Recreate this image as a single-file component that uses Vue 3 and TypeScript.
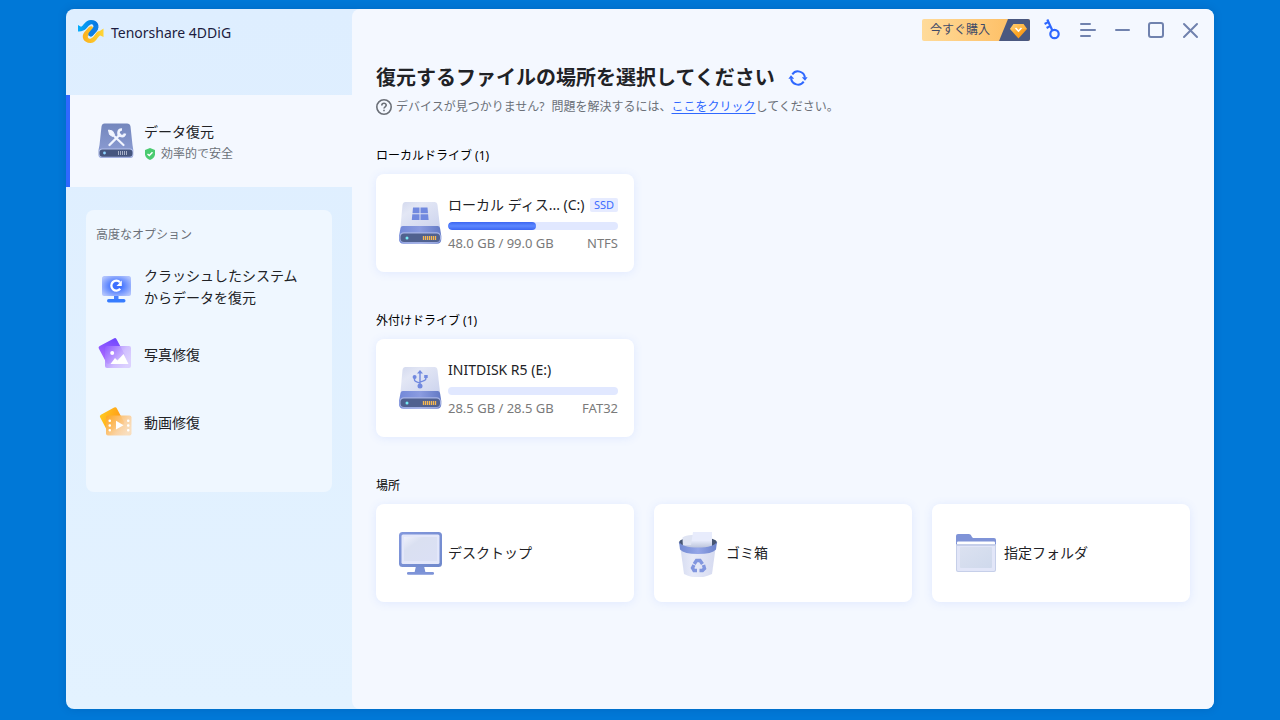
<script setup lang="ts">
interface Drive {
  id: string
  heading: string
  name: string
  used: string
  format: string
  percent: number
  badge?: string
  kind: 'windows' | 'usb'
}

interface Tool {
  id: 'crash' | 'photo' | 'video'
  lines: string[]
}

interface Place {
  id: 'desktop' | 'trash' | 'folder'
  name: string
}

const tools: Tool[] = [
  { id: 'crash', lines: ['クラッシュしたシステム', 'からデータを復元'] },
  { id: 'photo', lines: ['写真修復'] },
  { id: 'video', lines: ['動画修復'] },
]

const drives: Drive[] = [
  {
    id: 'c',
    heading: 'ローカルドライブ (1)',
    name: 'ローカル ディス... (C:)',
    used: '48.0 GB / 99.0 GB',
    format: 'NTFS',
    percent: 52,
    badge: 'SSD',
    kind: 'windows',
  },
  {
    id: 'e',
    heading: '外付けドライブ (1)',
    name: 'INITDISK R5 (E:)',
    used: '28.5 GB / 28.5 GB',
    format: 'FAT32',
    percent: 0,
    kind: 'usb',
  },
]

const places: Place[] = [
  { id: 'desktop', name: 'デスクトップ' },
  { id: 'trash', name: 'ゴミ箱' },
  { id: 'folder', name: '指定フォルダ' },
]
</script>

<template>
  <div class="desktop">
    <div class="window">
      <aside class="sidebar">
        <div class="brand">
          <svg class="logo" width="26" height="24" viewBox="0 0 26 24" aria-hidden="true">
            <defs>
              <linearGradient id="logoBlue" x1="0" y1="0" x2="1" y2="0">
                <stop offset="0" stop-color="#05adfb" />
                <stop offset="1" stop-color="#0870df" />
              </linearGradient>
              <linearGradient id="logoGold" x1="0" y1="0" x2="1" y2="0">
                <stop offset="0" stop-color="#fbb01c" />
                <stop offset="1" stop-color="#ffd535" />
              </linearGradient>
            </defs>
            <path d="M0 5 L3 6.800 C5.500 6 7 .3 13 0 C20 0 22.500 6.500 18.800 11 L14.800 15.600 C12.600 18 8.800 15.300 11 12.600 L15 7.800 C16.300 6 14.700 3.800 12.600 4.500 C9.400 5.800 8 12 0 11.500 Z" fill="url(#logoBlue)" />
            <path d="M25.500 8.500 V17 L22.300 15.500 C19.600 16 18.500 23 12.300 23 C5.500 23 2.800 16.500 6.300 12.300 L11 7 C13.300 4.700 16.800 7.400 14.800 10 L10.200 15.400 C9 17.200 10.900 19.400 12.900 18.600 C17 16.600 17.600 11 21.800 10.900 Z" fill="url(#logoGold)" />
            <path d="M18.800 11 L14.800 15.600 C12.600 18 8.800 15.300 11 12.600 L15 7.800 L19.500 4.500 Q21 8 18.800 11Z" fill="#0f7fe6" />
          </svg>
          <span>Tenorshare 4DDiG</span>
        </div>

        <button class="recovery" type="button">
          <svg width="36" height="36" viewBox="0 0 36 36" aria-hidden="true">
            <defs>
              <linearGradient id="caseTop" x1="0" y1="0" x2="0" y2="1">
                <stop offset="0" stop-color="#7487bd" />
                <stop offset="1" stop-color="#8f9fd6" />
              </linearGradient>
            </defs>
            <path d="M6.500 .5 H29 Q32 .5 32.500 3.500 L34.500 22 L35.300 27 V32 Q35.300 35 32 35 H4 Q.5 35 .5 32 V27 L1.500 22 L3.500 3.500 Q4 .5 6.500 .5Z" fill="url(#caseTop)" />
            <path d="M1 28.500 Q1 25.500 4 25.500 H32 Q35 25.500 35 28.500 V31.500 Q35 34.500 32 34.500 H4 Q1 34.500 1 31.500Z" fill="#b3c0ec" />
            <rect x="1.500" y="26.500" width="33" height="7.300" rx="3" fill="#46567f" />
            <circle cx="6.500" cy="30" r="1.400" fill="#8fd4ff" />
            <path d="M20.500 28v4m2-4v4m2-4v4m2-4v4m2-4v4" stroke="#a8b1c8" />
            <path d="M14.500 11.500 L25.500 22" stroke="#f0f4ff" stroke-width="2.200" stroke-linecap="round" />
            <path d="M10.500 7 L14.500 8 L16.500 11.500 L14.500 13.500 L11.500 11.500Z" fill="#f0f4ff" stroke="#f0f4ff" stroke-linejoin="round" />
            <path d="M22 11.500 L11.500 22" stroke="#f0f4ff" stroke-width="2.400" stroke-linecap="round" />
            <path d="M24 6.500 A3.300 3.300 0 1 0 27 10.500" fill="none" stroke="#f0f4ff" stroke-width="2.600" />
          </svg>
          <span class="recovery-text">
            <span class="recovery-name">データ復元</span>
            <span class="recovery-note">
              <svg width="12" height="12" viewBox="0 0 12 12" aria-hidden="true">
                <path d="M6 0 L11 2 V6.500 Q10.500 10 6 12 Q1.500 10 1 6.500 V2Z" fill="#4acb70" />
                <path d="M3.500 6 L5.300 7.600 L8.500 4.200" fill="none" stroke="#fff" stroke-width="1.400" />
              </svg>
              <span>効率的で安全</span>
            </span>
          </span>
        </button>

        <section class="advanced">
          <h2>高度なオプション</h2>
          <button v-for="tool in tools" :key="tool.id" class="tool" type="button">
            <svg v-if="tool.id === 'crash'" width="36" height="36" viewBox="0 0 36 36" aria-hidden="true">
              <defs>
                <radialGradient id="screenGlow" cx="50%" cy="50%" r="60%">
                  <stop offset=".25" stop-color="#3e70ff" />
                  <stop offset="1" stop-color="#afc2fd" />
                </radialGradient>
              </defs>
              <rect x="16" y="26" width="4.500" height="5" fill="#4a80ff" />
              <rect x="4" y="7" width="29" height="20" rx="2.500" fill="url(#screenGlow)" />
              <rect x="9" y="30" width="18.500" height="3.400" rx="1.700" fill="#367cff" />
              <path d="M22.200 19.800 A5 5 0 1 1 22 13.200" fill="none" stroke="#fff" stroke-width="2.300" />
              <path d="M23.800 11.500 V17 H18.500Z" fill="#fff" />
            </svg>
            <svg v-else-if="tool.id === 'photo'" width="36" height="36" viewBox="0 0 36 36" aria-hidden="true">
              <defs>
                <linearGradient id="violetBack" x1="0" y1="1" x2="1" y2="0">
                  <stop offset="0" stop-color="#b66dff" />
                  <stop offset="1" stop-color="#6d45ff" />
                </linearGradient>
                <linearGradient id="violetFront" x1="0" y1="0" x2="1" y2=".6">
                  <stop offset="0" stop-color="#9058ff" />
                  <stop offset=".65" stop-color="#cdb9ff" />
                  <stop offset="1" stop-color="#dacdff" />
                </linearGradient>
              </defs>
              <rect x="3.500" y="4" width="20" height="20" rx="2" transform="rotate(-28 13.500 14)" fill="url(#violetBack)" />
              <rect x="7" y="9" width="26" height="22" rx="2" fill="url(#violetFront)" opacity=".9" />
              <circle cx="14.200" cy="16" r="2" fill="#fff" />
              <path d="M12.500 27 L17 21 L19.500 23.500 L25.500 17 L30.500 27Z" fill="#fff" />
            </svg>
            <svg v-else width="36" height="36" viewBox="0 0 36 36" aria-hidden="true">
              <defs>
                <linearGradient id="amberBack" x1="0" y1="0" x2="1" y2="1">
                  <stop offset="0" stop-color="#ffcb20" />
                  <stop offset="1" stop-color="#ff8e16" />
                </linearGradient>
                <linearGradient id="amberFront" x1="0" y1="0" x2="1" y2=".6">
                  <stop offset="0" stop-color="#ffa51e" />
                  <stop offset=".7" stop-color="#fbd09d" />
                  <stop offset="1" stop-color="#f9dcb9" />
                </linearGradient>
              </defs>
              <rect x="4.500" y="5" width="19" height="19" rx="2" transform="rotate(-28 14 14.500)" fill="url(#amberBack)" />
              <rect x="8" y="10.500" width="25.500" height="20" rx="2" fill="url(#amberFront)" opacity=".92" />
              <path d="M18 15.800 L25.500 20.200 L18 24.600Z" fill="#fff" />
              <g fill="#fff">
                <rect x="10.500" y="14.500" width="2.500" height="2.500" rx="1" />
                <rect x="10.500" y="19.200" width="2.500" height="2.500" rx="1" />
                <rect x="10.500" y="24" width="2.500" height="2.500" rx="1" />
                <rect x="29" y="14.500" width="2.500" height="2.500" rx="1" />
                <rect x="29" y="19.200" width="2.500" height="2.500" rx="1" />
                <rect x="29" y="24" width="2.500" height="2.500" rx="1" />
              </g>
            </svg>
            <span class="tool-name">
              <span v-for="line in tool.lines" :key="line">{{ line }}</span>
            </span>
          </button>
        </section>
      </aside>

      <main class="content">
        <header class="titlebar">
          <button class="buy" type="button">
            <span>今すぐ購入</span>
            <svg width="32" height="22" viewBox="0 0 32 22" aria-hidden="true">
              <defs>
                <linearGradient id="gem" x1="0" y1="0" x2="1" y2="1">
                  <stop offset="0" stop-color="#ffd27a" />
                  <stop offset=".5" stop-color="#ffa726" />
                  <stop offset="1" stop-color="#f28a12" />
                </linearGradient>
              </defs>
              <path d="M10 0 H32 V22 H1Z" fill="#4a5880" />
              <path d="M15.500 5 H25.500 L29 10 L20.500 19.500 L12 10Z" fill="url(#gem)" />
              <path d="M15.500 5 H25.500 L29 10 H12Z" fill="#ffc766" opacity=".45" />
              <path d="M17.500 9 L20.500 12 L23.500 9" fill="none" stroke="#fff" stroke-width="1.600" />
            </svg>
          </button>
          <button class="icon-button" type="button" aria-label="登録">
            <svg width="24" height="24" viewBox="0 0 24 24" fill="none" stroke="#2f68ff" stroke-width="2.200" aria-hidden="true">
              <circle cx="12.500" cy="16" r="4.200" />
              <path d="M10.400 12.500 L5.300 1.500 M2.600 6 L7 3.600 M4.600 10 L9 7.600" />
            </svg>
          </button>
          <button class="icon-button" type="button" aria-label="メニュー">
            <svg width="24" height="24" viewBox="0 0 24 24" fill="none" stroke="#7082ae" stroke-width="2" stroke-linecap="round" aria-hidden="true">
              <path d="M5 6 H14 M5 12 H19 M5 18 H14" />
            </svg>
          </button>
          <button class="icon-button" type="button" aria-label="最小化">
            <svg width="24" height="24" viewBox="0 0 24 24" stroke="#7082ae" stroke-width="2" stroke-linecap="round" aria-hidden="true">
              <path d="M6 12 H19" />
            </svg>
          </button>
          <button class="icon-button" type="button" aria-label="最大化">
            <svg width="24" height="24" viewBox="0 0 24 24" fill="none" stroke="#7082ae" stroke-width="2" aria-hidden="true">
              <rect x="5" y="5" width="14" height="14" rx="2" />
            </svg>
          </button>
          <button class="icon-button" type="button" aria-label="閉じる">
            <svg width="24" height="24" viewBox="0 0 24 24" stroke="#7082ae" stroke-width="2" stroke-linecap="round" aria-hidden="true">
              <path d="M6 6 L19 19 M19 6 L6 19" />
            </svg>
          </button>
        </header>

        <div class="body">
          <div class="heading">
            <h1>復元するファイルの場所を選択してください</h1>
            <button class="refresh" type="button" aria-label="更新">
              <svg width="20" height="20" viewBox="0 0 20 20" aria-hidden="true">
                <path d="M4.300 6.300 A7 7 0 0 1 16.900 9.500 M15.700 13.700 A7 7 0 0 1 3.100 10.500" fill="none" stroke="#2f68ff" stroke-width="2" />
                <path d="M13.800 9.200 H19.600 L17 12.800Z M.4 10.800 H6.200 L3 7.200Z" fill="#2f68ff" />
              </svg>
            </button>
          </div>
          <p class="help">
            <svg width="16" height="16" viewBox="0 0 16 16" fill="none" stroke="#6b7078" stroke-width="1.600" aria-hidden="true">
              <circle cx="8" cy="8" r="7.200" />
              <path d="M5.800 6.500 C5.800 3.400 10.300 3.600 10.200 6.300 C10.200 7.800 8 7.800 8 9.600" />
              <path d="M8 10.800 V12.300" />
            </svg>
            <span class="question">デバイスが見つかりません?</span>
            <span>問題を解決するには、<a href="#">ここをクリック</a>してください。</span>
          </p>

          <section v-for="drive in drives" :key="drive.id" class="group">
            <h2>{{ drive.heading }}</h2>
            <div class="grid">
              <button class="card" type="button">
                <svg width="48" height="48" viewBox="0 0 48 48" aria-hidden="true">
                  <defs>
                    <linearGradient :id="'top-' + drive.id" x1="0" y1="0" x2="1" y2="1">
                      <stop offset="0" stop-color="#d3d9ee" />
                      <stop offset=".3" stop-color="#e3e7f5" />
                      <stop offset="1" stop-color="#cdd4ee" />
                    </linearGradient>
                    <linearGradient :id="'band-' + drive.id" x1="0" y1="0" x2="1" y2="0">
                      <stop offset="0" stop-color="#7288d8" />
                      <stop offset=".5" stop-color="#8b9ce0" />
                      <stop offset="1" stop-color="#6279c4" />
                    </linearGradient>
                  </defs>
                  <path d="M9.500 3 H38.500 Q41 3 41.500 6 L44 28 H4.500 L6.500 6 Q7 3 9.500 3Z" :fill="'url(#top-' + drive.id + ')'" />
                  <path d="M7 27 H41.500 Q44 27 44.200 30 L45.300 37 V40 Q45.300 44.800 41 44.800 H7.500 Q3 44.800 3 40 V37 L4.300 30 Q4.500 27 7 27Z" :fill="'url(#band-' + drive.id + ')'" />
                  <rect x="3.500" y="33.200" width="41.500" height="10.600" rx="4.500" fill="#a7b4e5" />
                  <rect x="4.500" y="34.500" width="39.500" height="8.500" rx="3.500" fill="#50618f" />
                  <circle cx="11" cy="39" r="1.500" fill="#75ecf5" />
                  <path d="M27.500 37v4m2-4v4m2-4v4m2-4v4m2-4v4m2-4v4m2-4v4" stroke="#f7b850" stroke-width="1.300" />
                  <path v-if="drive.kind === 'windows'" d="M17 8.500 H23.500 V14.300 H16.500Z M24.500 8.500 H31.500 L32 14.300 H24.500Z M16.300 15.300 H23.500 V21 H15.800Z M24.500 15.300 H32.100 L32.600 21 H24.500Z" fill="#7189df" />
                  <g v-else fill="none" stroke="#7189df" stroke-width="1.400">
                    <path d="M24 8.500 V21 M18.500 14 V16 Q18.500 17.500 24 19 M29.800 13.500 V15 Q29.800 16.500 24 18" />
                    <path d="M24 6 L27 9.500 H21Z M28.200 11 h3.500 v3 H28.200Z" fill="#7189df" stroke="none" />
                    <circle cx="18.600" cy="13" r="2" fill="#7189df" stroke="none" />
                    <circle cx="24" cy="22" r="2.500" fill="#7189df" stroke="none" />
                  </g>
                </svg>
                <span class="info">
                  <span class="info-row">
                    <span class="name">{{ drive.name }}</span>
                    <span v-if="drive.badge" class="badge">{{ drive.badge }}</span>
                  </span>
                  <span class="meter">
                    <span class="meter-fill" :style="{ width: drive.percent + '%' }"></span>
                  </span>
                  <span class="info-row usage">
                    <span>{{ drive.used }}</span>
                    <span>{{ drive.format }}</span>
                  </span>
                </span>
              </button>
            </div>
          </section>

          <section class="group">
            <h2>場所</h2>
            <div class="grid">
              <button v-for="place in places" :key="place.id" class="card" type="button">
                <svg v-if="place.id === 'desktop'" width="48" height="48" viewBox="0 0 48 48" aria-hidden="true">
                  <defs>
                    <linearGradient id="screen" x1="0" y1="0" x2="1" y2="1">
                      <stop offset="0" stop-color="#eef0fb" />
                      <stop offset=".3" stop-color="#dae0f1" />
                      <stop offset="1" stop-color="#dbe0f5" />
                    </linearGradient>
                    <linearGradient id="frame" x1="0" y1="0" x2="1" y2="1">
                      <stop offset="0" stop-color="#8398dd" />
                      <stop offset="1" stop-color="#6f88cb" />
                    </linearGradient>
                  </defs>
                  <path d="M20 37 H28 L29.500 43.500 H18.500Z" fill="#7a91d5" />
                  <rect x="3" y="3" width="43" height="35" rx="3.500" fill="url(#frame)" />
                  <rect x="5.500" y="5.500" width="38" height="29.500" rx="1.500" fill="#e3e7fa" />
                  <rect x="8" y="8" width="33" height="24" fill="url(#screen)" />
                  <rect x="11" y="43" width="27" height="2.700" rx="1.300" fill="#7e94d8" />
                </svg>
                <svg v-else-if="place.id === 'trash'" width="48" height="48" viewBox="0 0 48 48" aria-hidden="true">
                  <defs>
                    <linearGradient id="pail" x1="0" y1="0" x2="1" y2="0">
                      <stop offset="0" stop-color="#d6dcf1" />
                      <stop offset=".35" stop-color="#e7eaf8" />
                      <stop offset="1" stop-color="#d5daf0" />
                    </linearGradient>
                    <linearGradient id="rim" x1="0" y1="0" x2="1" y2="0">
                      <stop offset="0" stop-color="#7189d2" />
                      <stop offset=".5" stop-color="#94a6e8" />
                      <stop offset="1" stop-color="#6c83cc" />
                    </linearGradient>
                    <linearGradient id="paper" x1="0" y1="0" x2="0" y2="1">
                      <stop offset=".5" stop-color="#e8ecfc" />
                      <stop offset="1" stop-color="#b3bdd5" />
                    </linearGradient>
                  </defs>
                  <path d="M6 16 H42 L38 45 Q31 48.500 24 48.500 Q16 48.500 10 45Z" fill="url(#pail)" />
                  <ellipse cx="24" cy="13.500" rx="19" ry="5.800" fill="#465574" />
                  <path d="M8.500 8.500 Q12 5.500 20 6 V20 H9Z" fill="#dfe4f3" />
                  <path d="M19 3 H38 V20 H9 V16 H17Z" fill="url(#paper)" />
                  <path d="M5 12.500 Q8 18.500 24 18.500 Q40 18.500 43 12.500 L42 20.500 Q38 25 24 25 Q10 25 6 20.500Z" fill="url(#rim)" />
                  <g fill="none" stroke="#8196df" stroke-width="3.400">
                    <path d="M20.200 35 L22.500 31.500 H26 L28.500 35" />
                    <path d="M29.500 36 L30.500 39.500 L28.500 41.500 H25.500" />
                    <path d="M23 41.500 H20 L18.500 39 L20 36" />
                  </g>
                </svg>
                <svg v-else width="48" height="48" viewBox="0 0 48 48" aria-hidden="true">
                  <defs>
                    <linearGradient id="folderFront" x1="0" y1="0" x2="1" y2="1">
                      <stop offset="0" stop-color="#dbe1f0" />
                      <stop offset="1" stop-color="#cfd9ec" />
                    </linearGradient>
                  </defs>
                  <path d="M4 7 Q4 5 6 5 H17 Q19 5 20 8 L21 9 H42 Q44 9 44 11 V20 H4Z" fill="#7f93d7" />
                  <rect x="5" y="12.500" width="38" height="4" rx="1" fill="#fff" />
                  <path d="M4 16 Q4 15 5 15 H43 Q44 15 44 16 V41 Q44 43 42 43 H6 Q4 43 4 41Z" fill="#c6cfe9" />
                  <path d="M5 17 H43 V40.500 Q43 42 41.500 42 H6.500 Q5 42 5 40.500Z" fill="#e2e6f8" />
                  <rect x="8" y="18" width="32" height="21" rx="1" fill="url(#folderFront)" />
                </svg>
                <span class="name">{{ place.name }}</span>
              </button>
            </div>
          </section>
        </div>
      </main>
    </div>
  </div>
</template>

<style>
body {
  margin: 0;
}
</style>

<style scoped>
.desktop {
  box-sizing: border-box;
  display: flex;
  min-height: 100vh;
  padding: 9px 66px 11px;
  background: #0078d7;
  color: #212226;
  font-family: "Noto Sans", "Noto Sans CJK JP", sans-serif;
  font-size: 14px;
}

.window {
  flex: 1;
  display: flex;
  min-width: 0;
  overflow: hidden;
  border-radius: 8px;
  background: linear-gradient(#deeeff, #e3f2ff);
  box-shadow: 0 0 8px rgba(0, 50, 110, 0.2);
}

button {
  margin: 0;
  padding: 0;
  border: 0;
  background: none;
  color: inherit;
  font: inherit;
  text-align: left;
  cursor: pointer;
}

svg {
  display: block;
  flex: none;
}

h1,
h2,
p {
  margin: 0;
}

.sidebar {
  flex: 0 0 286px;
  display: flex;
  flex-direction: column;
}

.brand {
  box-sizing: border-box;
  display: flex;
  align-items: center;
  gap: 7px;
  height: 86px;
  padding: 0 12px 40px;
  color: #1c1c40;
}

.recovery {
  display: flex;
  align-items: center;
  gap: 10px;
  height: 92px;
  padding-left: 28px;
  border-left: 4px solid #2f68ff;
  background: #f4f8ff;
}

.recovery-text {
  display: flex;
  flex-direction: column;
  gap: 1px;
  padding-top: 2px;
}

.recovery-name {
  line-height: 22px;
}

.recovery-note {
  display: flex;
  align-items: center;
  gap: 5px;
  color: #6b7078;
  font-size: 12px;
  line-height: 20px;
}

.advanced {
  display: flex;
  flex-direction: column;
  margin: 23px 20px;
  padding: 15px 10px 35px;
  border-radius: 8px;
  background: #eff7ff;
}

.advanced h2 {
  margin-bottom: 8px;
  color: #6b7078;
  font-size: 12px;
  font-weight: 400;
  line-height: 20px;
}

.tool {
  display: flex;
  align-items: center;
  gap: 10px;
  min-height: 68px;
  padding-left: 2px;
}

.tool-name {
  display: flex;
  flex-direction: column;
  line-height: 22px;
}

.content {
  flex: 1;
  min-width: 0;
  border-radius: 8px;
  background: #f4f8ff;
}

.titlebar {
  display: flex;
  align-items: center;
  justify-content: flex-end;
  gap: 10px;
  padding: 9px 12px 0;
}

.buy {
  display: flex;
  align-items: center;
  justify-content: space-between;
  width: 108px;
  height: 22px;
  margin-right: 2px;
  padding-left: 8px;
  overflow: hidden;
  border-radius: 2px;
  background: linear-gradient(90deg, #ffdb9a, #fdb95a);
  color: #3f4a68;
  font-size: 12px;
  line-height: 22px;
}

.body {
  padding: 21px 24px;
}

.heading {
  display: flex;
  align-items: center;
  gap: 13px;
}

h1 {
  font-size: 20px;
  font-weight: 700;
  line-height: 30px;
}

.help {
  display: flex;
  align-items: center;
  gap: 4px;
  margin: 4px 0 30px;
  color: #6b7078;
  font-size: 12px;
  line-height: 20px;
}

.question {
  margin-right: 3px;
}

.help a {
  color: #2f68ff;
  text-underline-offset: 2px;
}

.group {
  margin-bottom: 40px;
}

.group h2 {
  margin-bottom: 9px;
  color: #000;
  font-size: 12px;
  font-weight: 400;
  line-height: 18px;
}

.grid {
  display: grid;
  grid-template-columns: repeat(3, minmax(0, 1fr));
  gap: 20px;
}

.card {
  display: flex;
  align-items: center;
  gap: 4px;
  min-height: 98px;
  padding: 0 16px 0 20px;
  border-radius: 8px;
  background: #fff;
  box-shadow: 0 1px 10px rgba(80, 120, 255, 0.12);
}

.info {
  flex: 1;
  display: flex;
  flex-direction: column;
  min-width: 0;
}

.info-row {
  display: flex;
  align-items: center;
  justify-content: space-between;
}

.name {
  line-height: 20px;
  white-space: nowrap;
}

.badge {
  padding: 0 4px;
  border-radius: 2px;
  background: #e6ebff;
  color: #3a6bff;
  font-size: 11px;
  line-height: 14px;
}

.meter {
  height: 8px;
  margin: 7px 0 5px;
  overflow: hidden;
  border-radius: 4px;
  background: #e1e8ff;
}

.meter-fill {
  display: block;
  height: 8px;
  border-radius: 4px;
  background: linear-gradient(#3c66f2, #5c88ff, #3c66f2);
}

.usage {
  color: #7a7a7a;
  font-size: 13px;
  line-height: 16px;
}
</style>
